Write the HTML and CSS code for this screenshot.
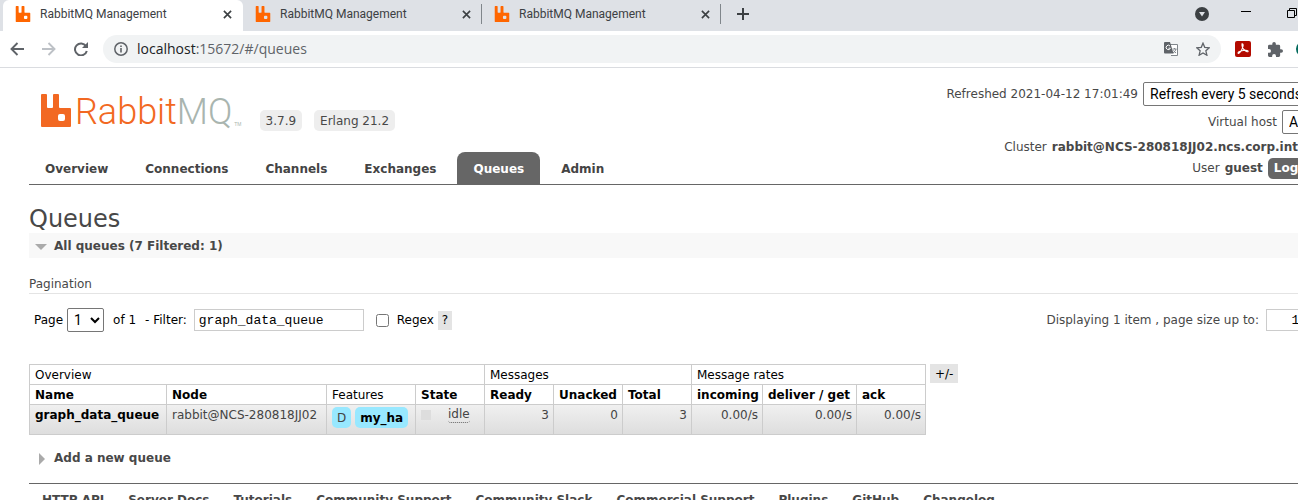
FILE: index.html
```html
<!DOCTYPE html>
<html lang="en">
<head>
<meta charset="utf-8">
<title>RabbitMQ Management</title>
<link rel="stylesheet" href="styles.css">
</head>
<body>
<svg class="defs" aria-hidden="true">
  <symbol id="rabbit" viewBox="0 0 30 33"><path fill-rule="evenodd" d="M1 0h4q1 0 1 1v12q0 1 1 1h4q1 0 1-1V1q0-1 1-1h4q1 0 1 1v12q0 1 1 1h10q1 0 1 1v17q0 1-1 1H1q-1 0-1-1V1q0-1 1-1zM19 20q-2 0-2 2v3q0 2 2 2h3q2 0 2-2v-3q0-2-2-2z"/></symbol>
  <symbol id="close" viewBox="0 0 10 10"><path d="M1 1l8 8M9 1L1 9" fill="none" stroke="#3c4043" stroke-width="1.8"/></symbol>
</svg>
<div class="browser">
  <div class="tabstrip">
    <div class="btab current"><svg class="fav"><use href="#rabbit"/></svg><span class="btitle">RabbitMQ Management</span><button class="plain" aria-label="Close tab"><svg class="x"><use href="#close"/></svg></button></div>
    <div class="btab"><svg class="fav"><use href="#rabbit"/></svg><span class="btitle">RabbitMQ Management</span><button class="plain" aria-label="Close tab"><svg class="x"><use href="#close"/></svg></button></div>
    <div class="btab"><svg class="fav"><use href="#rabbit"/></svg><span class="btitle">RabbitMQ Management</span><button class="plain" aria-label="Close tab"><svg class="x"><use href="#close"/></svg></button></div>
    <button class="plain newtab" aria-label="New tab"><svg width="12" height="12" viewBox="0 0 12 12"><path d="M6 0v12M0 6h12" stroke="#3c4043" stroke-width="2"/></svg></button>
    <div class="winbtns">
      <button class="plain" aria-label="Search tabs"><svg width="14" height="14" viewBox="0 0 14 14"><circle cx="7" cy="7" r="7" fill="#3c4043"/><path d="M4 5h6L7 9.500z" fill="#dee1e6"/></svg></button>
      <button class="plain" aria-label="Minimize"><svg width="10" height="14" viewBox="0 0 10 14"><path d="M0 4.500h10" stroke="#000"/></svg></button>
      <button class="plain" aria-label="Restore"><svg width="11" height="14" viewBox="0 0 11 14"><path d="M.5 3.500h7v7h-7zM2.500 3.500v-2h7v7h-2" fill="none" stroke="#000"/></svg></button>
    </div>
  </div>
  <div class="toolbar">
    <div class="navbtns">
      <button class="plain" aria-label="Back"><svg width="14" height="14" viewBox="0 0 14 14"><path d="M14 7H1.500M7.500 1l-6 6 6 6" fill="none" stroke="#5f6368" stroke-width="1.900"/></svg></button>
      <button class="plain" aria-label="Forward"><svg width="14" height="14" viewBox="0 0 14 14"><path d="M0 7h12.500M6.500 1l6 6-6 6" fill="none" stroke="#bdc1c6" stroke-width="1.900"/></svg></button>
      <button class="plain" aria-label="Reload"><svg width="14" height="14" viewBox="0 0 14 14"><path d="M12 4.100A6 6 0 1 0 12.800 9" fill="none" stroke="#5f6368" stroke-width="2"/><path d="M14 0v6H8z" fill="#5f6368"/></svg></button>
    </div>
    <div class="omnibox">
      <svg width="14" height="14" viewBox="0 0 14 14"><circle cx="7" cy="7" r="6.200" fill="none" stroke="#5f6368" stroke-width="1.500"/><path d="M7 6v4.500M7 3.500v1.500" stroke="#5f6368" stroke-width="1.600"/></svg>
      <span class="url"><span class="host">localhost</span>:15672/#/queues</span>
      <svg width="14" height="14" viewBox="0 0 14 14"><path d="M6 2.500h7.500v11H7" fill="#fff" stroke="#80868b"/><path d="M1 0h5l3.500 11.500H1q-1 0-1-1V1q0-1 1-1z" fill="#5f6368"/><path d="M6 4a2.200 2.200 0 1 0 .4 2.200H4.500" fill="none" stroke="#fff"/><path d="M8.500 7h4M10.500 6v1M12 7q-.5 2.500-3 4M9.300 8.500l2.700 2.500" fill="none" stroke="#80868b"/></svg>
      <svg width="14" height="14" viewBox="0 0 24 24"><path d="M12 2l3 7.200 7.800.7-5.900 5.200 1.800 7.600L12 18.700l-6.700 4 1.800-7.600L1.200 9.900 9 9.200z" fill="none" stroke="#5f6368" stroke-width="2.200"/></svg>
    </div>
    <div class="exts">
      <svg width="16" height="16" viewBox="0 0 16 16"><rect width="16" height="16" rx="2" fill="#b30b00"/><path d="M7.500 3c1.500 0 0 4.500-1.500 7s-3 3-3 1.800S8 9 11 9.200s2.500 1.800 1 1.600S7 7.500 7 4.500 7.200 3 7.500 3z" fill="none" stroke="#fff" stroke-width="1.100"/></svg>
      <svg width="15" height="15" viewBox="2 1 21 21"><path fill="#5f6368" d="M20.500 11H19V7a2 2 0 0 0-2-2h-4V3.500a2.500 2.500 0 0 0-5 0V5H4a2 2 0 0 0-2 2v3.800h1.500a2.700 2.700 0 0 1 0 5.400H2V20a2 2 0 0 0 2 2h3.800v-1.500a2.700 2.700 0 0 1 5.400 0V22H17a2 2 0 0 0 2-2v-4h1.500a2.500 2.500 0 0 0 0-5z"/></svg>
      <span class="avatar"></span>
    </div>
  </div>
</div>
<div class="page">
  <header>
    <div class="brand">
      <a class="logo" href="#"><svg class="mark"><use href="#rabbit"/></svg><span class="word">Rabbit<span class="mq">MQ</span></span><span class="tm">TM</span></a>
      <span class="version">3.7.9</span><span class="version">Erlang 21.2</span>
    </div>
    <nav>
      <a href="#">Overview</a><a href="#">Connections</a><a href="#">Channels</a><a href="#">Exchanges</a><a href="#" class="selected">Queues</a><a href="#">Admin</a>
    </nav>
    <div class="status">
      <div><label for="refresh">Refreshed 2021-04-12 17:01:49</label><select id="refresh" class="refresh"><option>Refresh every 5 seconds</option></select></div>
      <div><label for="vhost">Virtual host</label><select id="vhost"><option>All</option></select></div>
      <div class="cluster"><span>Cluster</span><b>rabbit@NCS-280818JJ02.ncs.corp.int</b></div>
      <div class="user"><span>User</span><b>guest</b><button class="logout">Log out</button></div>
    </div>
  </header>
  <main>
    <h1>Queues</h1>
    <h2 class="open"><svg width="12" height="6" viewBox="0 0 12 6"><path d="M0 0h12L6 6z" fill="#aaa"/></svg>All queues (7 Filtered: 1)</h2>
    <h3>Pagination</h3>
    <div class="filters">
      <label for="pg">Page</label><select id="pg" class="pg"><option>1</option></select><span class="of">of 1</span><label for="filter">- Filter:</label><input id="filter" class="filter" type="text" value="graph_data_queue"><input id="regex" type="checkbox"><label for="regex">Regex</label><button class="gray help">?</button>
      <label class="size" for="size">Displaying 1 item , page size up to:</label><input id="size" class="sizebox" type="text" value="100">
    </div>
    <div class="tablewrap">
      <table>
        <colgroup><col class="c1"><col class="c2"><col class="c3"><col class="n"><col class="n"><col class="n"><col class="n"><col class="c8"><col class="c9"><col class="n"></colgroup>
        <thead>
          <tr><th class="light" colspan="4">Overview</th><th class="light" colspan="3">Messages</th><th class="light" colspan="3">Message rates</th></tr>
          <tr><th>Name</th><th>Node</th><th class="light">Features</th><th>State</th><th>Ready</th><th>Unacked</th><th>Total</th><th>incoming</th><th>deliver / get</th><th>ack</th></tr>
        </thead>
        <tbody>
          <tr><td><a href="#">graph_data_queue</a></td><td>rabbit@NCS-280818JJ02</td><td><div class="tags"><span class="tag">D</span><a class="tag" href="#">my_ha</a></div></td><td><div class="state"><span class="dot"></span><span class="idle">idle</span></div></td><td class="r">3</td><td class="r">0</td><td class="r">3</td><td class="r">0.00/s</td><td class="r">0.00/s</td><td class="r">0.00/s</td></tr>
        </tbody>
      </table>
      <button class="gray">+/-</button>
    </div>
    <h2 class="shut"><svg width="12" height="12" viewBox="0 0 12 12"><path d="M3 0v12l6-6z" fill="#aaa"/></svg>Add a new queue</h2>
  </main>
  <footer>
    <a href="#">HTTP API</a><a href="#">Server Docs</a><a href="#">Tutorials</a><a href="#">Community Support</a><a href="#">Community Slack</a><a href="#">Commercial Support</a><a href="#">Plugins</a><a href="#">GitHub</a><a href="#">Changelog</a>
  </footer>
</div>
</body>
</html>
```
FILE: styles.css
```css
* { box-sizing: border-box; }
html { overflow: hidden; }
body { margin: 0; background: #fff; color: #484848; font: 12px/16px "DejaVu Sans", Verdana, sans-serif; overflow: hidden; }
a { color: inherit; text-decoration: none; }
button, select, input { font: inherit; margin: 0; }
svg { display: block; flex: none; }
.defs { position: absolute; width: 0; height: 0; }
.plain { border: 0; background: none; padding: 0; }

.tabstrip { display: flex; height: 31px; background: #dee1e6; padding-left: 3px; overflow: hidden; }
.btab { display: flex; align-items: center; width: 239px; height: 31px; padding: 0 11px 3px 12px; font: 12px/16px Roboto, sans-serif; color: #3c4043; }
.btab.current { background: #fff; border-radius: 6px 6px 0 0; width: 240px; }
.btab:nth-child(n+2) { background: linear-gradient(#80868b, #80868b) right 4px / 1px 20px no-repeat; }
.fav { width: 16px; height: 16px; fill: #f60; margin-right: 9px; }
.btitle { flex: 1; }
.x { width: 9px; height: 9px; }
.newtab { margin: 0 0 4px 16px; }
.winbtns { display: flex; align-items: center; gap: 32px; margin-left: auto; padding-bottom: 3px; }
.winbtns button:last-child { margin-left: 4px; }
.toolbar { display: flex; align-items: center; height: 37px; border-bottom: 1px solid #dadce0; overflow: hidden; }
.navbtns { display: flex; gap: 18px; padding: 0 15px 0 10px; }
.omnibox { flex: 1; display: flex; align-items: center; gap: 18px; height: 28px; padding: 0 11px; border-radius: 14px; background: #f1f3f4; }
.url { flex: 1; margin-left: -9px; font: 14px/20px "Open Sans", sans-serif; color: #5f6368; }
.host { color: #202124; }
.exts { display: flex; align-items: center; gap: 17px; margin: 0 -14px 0 14px; }
.avatar { width: 16px; height: 16px; border-radius: 50%; background: #00695c; margin-left: -4px; }

/* The page is wider than the window and runs on past its right edge. */
.page { width: calc(100% + 26px); padding-left: 29px; }
header { display: grid; grid-template-columns: 1fr auto; grid-template-rows: 84px 32px; border-bottom: 1px solid #666; }
.brand { display: flex; align-items: flex-end; padding: 0 0 21px 12px; }
.logo { display: flex; align-items: flex-end; margin-right: 18px; }
.mark { width: 30px; height: 33px; fill: #f26822; margin: 0 4px 4px 0; }
.word { font: 300 36px/38px Roboto, sans-serif; color: #f26822; }
.mq { color: #a9b5af; }
.tm { font: 5px/8px "Liberation Sans", sans-serif; color: #a9b5af; margin: 0 0 3px 2px; }
.version { background: #eee; border-radius: 5px; padding: 3px 6px 2px; margin-right: 12px; }
nav { grid-row: 2; display: flex; gap: 5px; }
nav a { padding: 9px 16px 7px; font-weight: bold; border-radius: 8px 8px 0 0; color: #444; }
nav .selected { background: #666; color: #fff; }
.status { grid-column: 2; grid-row: 1 / 3; padding-top: 14px; }
.status div { display: flex; justify-content: flex-end; align-items: center; gap: 5px; height: 24px; margin-bottom: 4px; }
.status .cluster { height: 18px; margin: 0 26px 1px 0; }
.status .user { height: 22px; margin: 0 -7px 0 0; }
select { height: 24px; border: 1px solid #767676; border-radius: 2px; background: #fff; color: #000; padding: 0 2px; font: 14px Roboto, Arial, sans-serif; }
.refresh { width: 181px; }
.logout { border: 0; border-radius: 5px; background: #666; color: #fff; font-weight: bold; height: 21px; padding: 0 6px; }

h1, h2, h3 { margin: 0; font-size: 12px; }
h1 { font-size: 24px; font-weight: normal; line-height: 28px; padding-top: 20px; }
h2 { display: flex; align-items: center; gap: 8px; padding: 5px; line-height: 15px; }
.open { background: #f8f8f8; padding: 6px 6px 4px; gap: 7px; }
.shut { margin-top: 11px; padding-left: 7px; gap: 6px; }
h3 { font-weight: normal; line-height: 16px; padding: 18px 0 1px; border-bottom: 1px solid #e4e4e4; }
.filters { display: flex; align-items: center; padding: 14px 0 0 5px; color: #000; }
.pg { width: 37px; margin: 0 9px 0 4px; }
.of { margin-right: 9px; }
.filter, .sizebox { border: 1px solid #ccc; height: 22px; padding: 0 4px; font: 13px "Liberation Mono", "Courier New", monospace; width: 170px; margin: 0 12px 0 7px; }
.filters [type=checkbox] { width: 13px; height: 13px; margin-right: 8px; }
.gray { border: 0; background: #e4e4e4; color: #000; padding: 0 5px; height: 19px; }
.help { margin-left: 4px; padding: 0 4px; }
.size { margin-left: auto; color: #484848; }
.sizebox { width: 54px; margin-right: 4px; text-align: right; }

.tablewrap { display: flex; gap: 4px; margin-top: 32px; align-items: flex-start; color: #000; }
table { border-collapse: collapse; }
th, td { border: 1px solid #ccc; padding: 2px 3px 1px 5px; text-align: left; white-space: nowrap; vertical-align: top; }
.light { font-weight: normal; }
td { color: #444; height: 30px; }
tbody tr { background: linear-gradient(#f0f0f0, #ddd); }
td a { font-weight: bold; color: #000; }
.r { text-align: right; padding-right: 4px; }
.c1 { width: 137px; } .c2 { width: 160px; } .c3 { width: 89px; } .n { width: 69px; } .c8 { width: 71px; } .c9 { width: 94px; }
.tags { display: flex; gap: 4px; }
.tag { background: #98e8ff; border-radius: 5px; padding: 3px 5px 2px; }
.state { display: flex; align-items: center; gap: 17px; }
.dot { width: 10px; height: 10px; background: #ddd; }
.idle { border-bottom: 1px dotted #666; border-radius: 3px; line-height: 15px; }

footer { display: flex; gap: 24px; margin-top: 12px; padding: 8px 13px; border-top: 1px solid #666; font-weight: bold; white-space: nowrap; }
```
